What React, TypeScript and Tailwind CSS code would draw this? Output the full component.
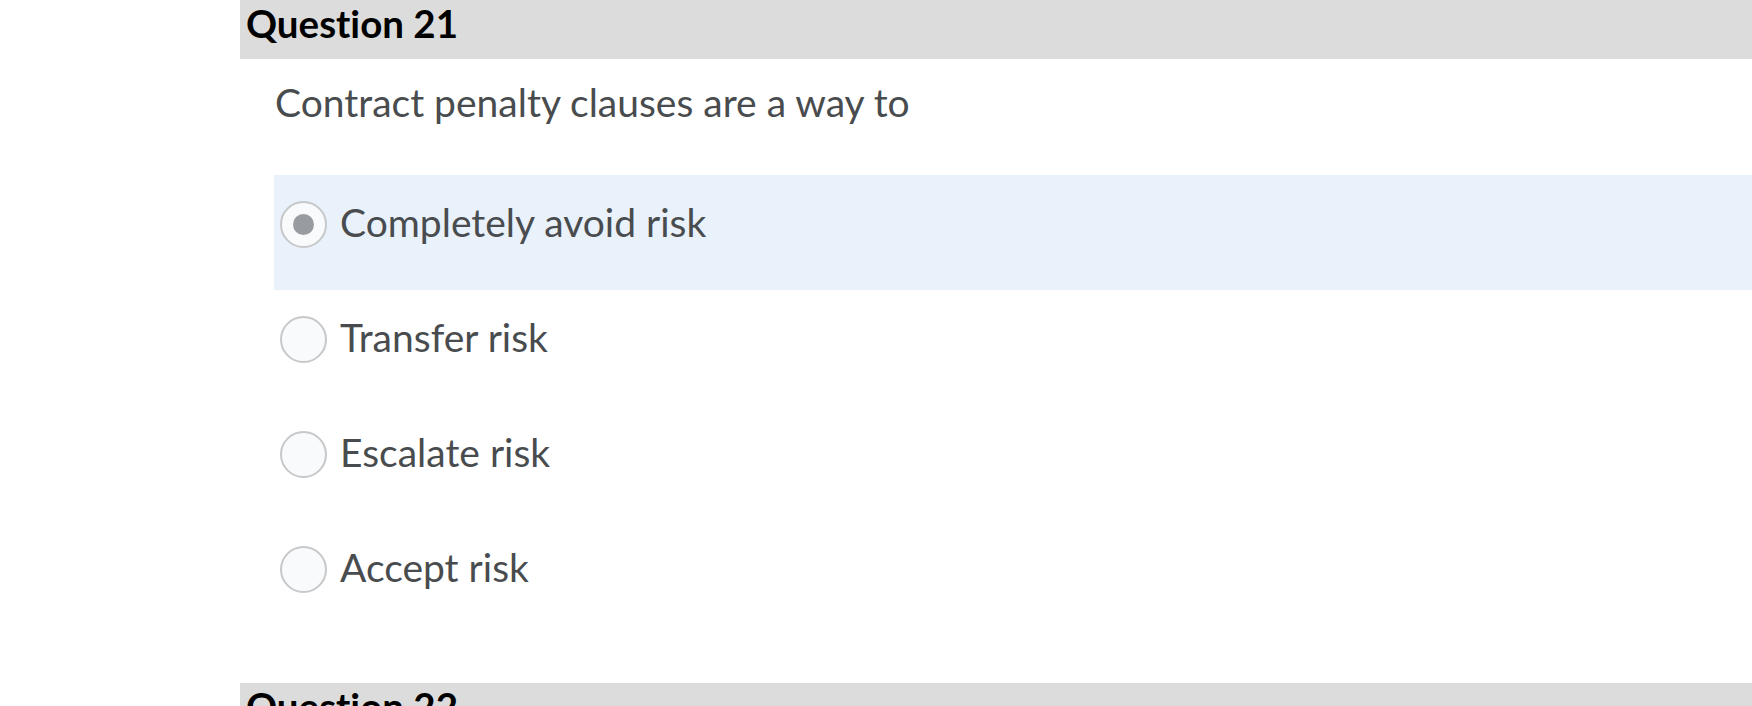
import React from "react";

const options = [
  { label: "Completely avoid risk", selected: true },
  { label: "Transfer risk", selected: false },
  { label: "Escalate risk", selected: false },
  { label: "Accept risk", selected: false },
];

export default function App() {
  return (
    <div
      className="w-full h-[706px] overflow-hidden bg-white [font-variant-ligatures:none]"
      style={{ fontFamily: "Lato, 'Noto Sans', sans-serif" }}
    >
      <div className="pl-[240px]">
        <div className="h-[59px] bg-[#dcdcdc] pl-[6px]">
          <h2 className="text-[38.5px] leading-[1.2] font-bold text-[#000000]">Question 21</h2>
        </div>
        <p className="mt-[20px] pl-[35px] text-[39px] leading-[1.2] text-[#494c4e]">
          Contract penalty clauses are a way to
        </p>
        <div className="mt-[49px] ml-[34px] flex flex-col">
          {options.map((o) => (
            <div
              key={o.label}
              className={
                "h-[115px] flex items-start pt-[24px] pl-[6px] gap-[13px] " +
                (o.selected ? "bg-[#e9f1fb]" : "bg-white")
              }
            >
              <div className="mt-[2px] w-[47px] h-[47px] shrink-0 rounded-full border-2 border-[#c6c8ca] bg-[#f9fafc] flex items-center justify-center">
                {o.selected && <div className="w-[21px] h-[21px] rounded-full bg-[#989ca1]" />}
              </div>
              <span className="text-[39px] leading-[1.2] text-[#494c4e]">{o.label}</span>
            </div>
          ))}
        </div>
        <div className="mt-[48px] h-[59px] bg-[#dcdcdc] pl-[6px]">
          <h2 className="text-[38.5px] leading-[1.2] font-bold text-[#000000]">Question 22</h2>
        </div>
      </div>
    </div>
  );
}
